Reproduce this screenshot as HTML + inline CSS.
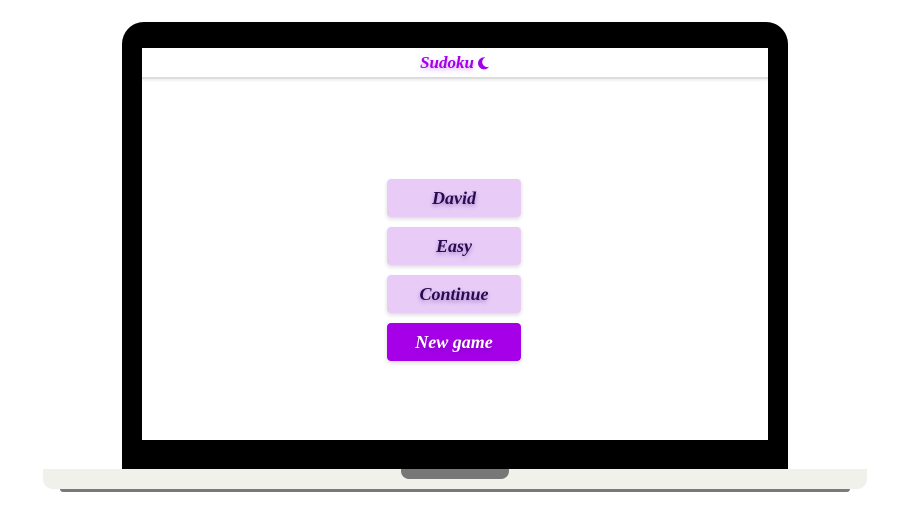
<!DOCTYPE html>
<html><head><style>
body{margin:0;width:910px;height:518px;background:#fff;position:relative;overflow:hidden;font-family:"Liberation Serif",serif}
.frame{position:absolute;left:122px;top:22px;width:666px;height:460px;background:#000;border-radius:22px 22px 0 0}
.screen{position:absolute;left:142px;top:48px;width:626px;height:392px;background:#fff}
.hdr{position:absolute;left:0;top:0;width:626px;height:29px;border-bottom:2px solid #ddd;box-shadow:0 1px 3px rgba(0,0,0,.1);text-align:center;line-height:30px;font-size:17px;font-weight:bold;font-style:italic;color:#a100e8;text-shadow:0 2px 4px rgba(160,0,230,.35)}
.hdr svg{vertical-align:-2px;margin-left:3px}
.base{position:absolute;left:43px;top:469px;width:824px;height:20px;background:#f1f1eb;border-radius:0 0 10px 10px}
.notch{position:absolute;left:401px;top:469px;width:108px;height:10px;background:#777;border-radius:0 0 8px 8px}
.sh{position:absolute;left:60px;top:489px;width:790px;height:3px;background:#7a7a7a;border-radius:0 0 4px 4px}
.b{position:absolute;left:245px;width:134px;height:38px;border-radius:4px;background:#e9cbf8;box-shadow:0 2px 4px rgba(0,0,0,.15);text-align:center;line-height:38px;font-size:18px;font-weight:bold;font-style:italic;color:#2a0a50;text-shadow:0 2px 4px rgba(60,0,120,.35)}
.n{background:#a600e8;color:#fff}
</style></head><body>
<div class="frame"></div>
<div class="screen">
<div class="hdr">Sudoku<svg width="13" height="14" viewBox="0 0 14 14"><path d="M9 1A6.5 6.5 0 1 0 13 11A5 5 0 0 1 9 1Z" fill="#a100e8"/></svg></div>
<div class="b" style="top:131px">David</div>
<div class="b" style="top:179px">Easy</div>
<div class="b" style="top:227px">Continue</div>
<div class="b n" style="top:275px">New game</div>
</div>
<div class="base"></div><div class="notch"></div><div class="sh"></div>
</body></html>
